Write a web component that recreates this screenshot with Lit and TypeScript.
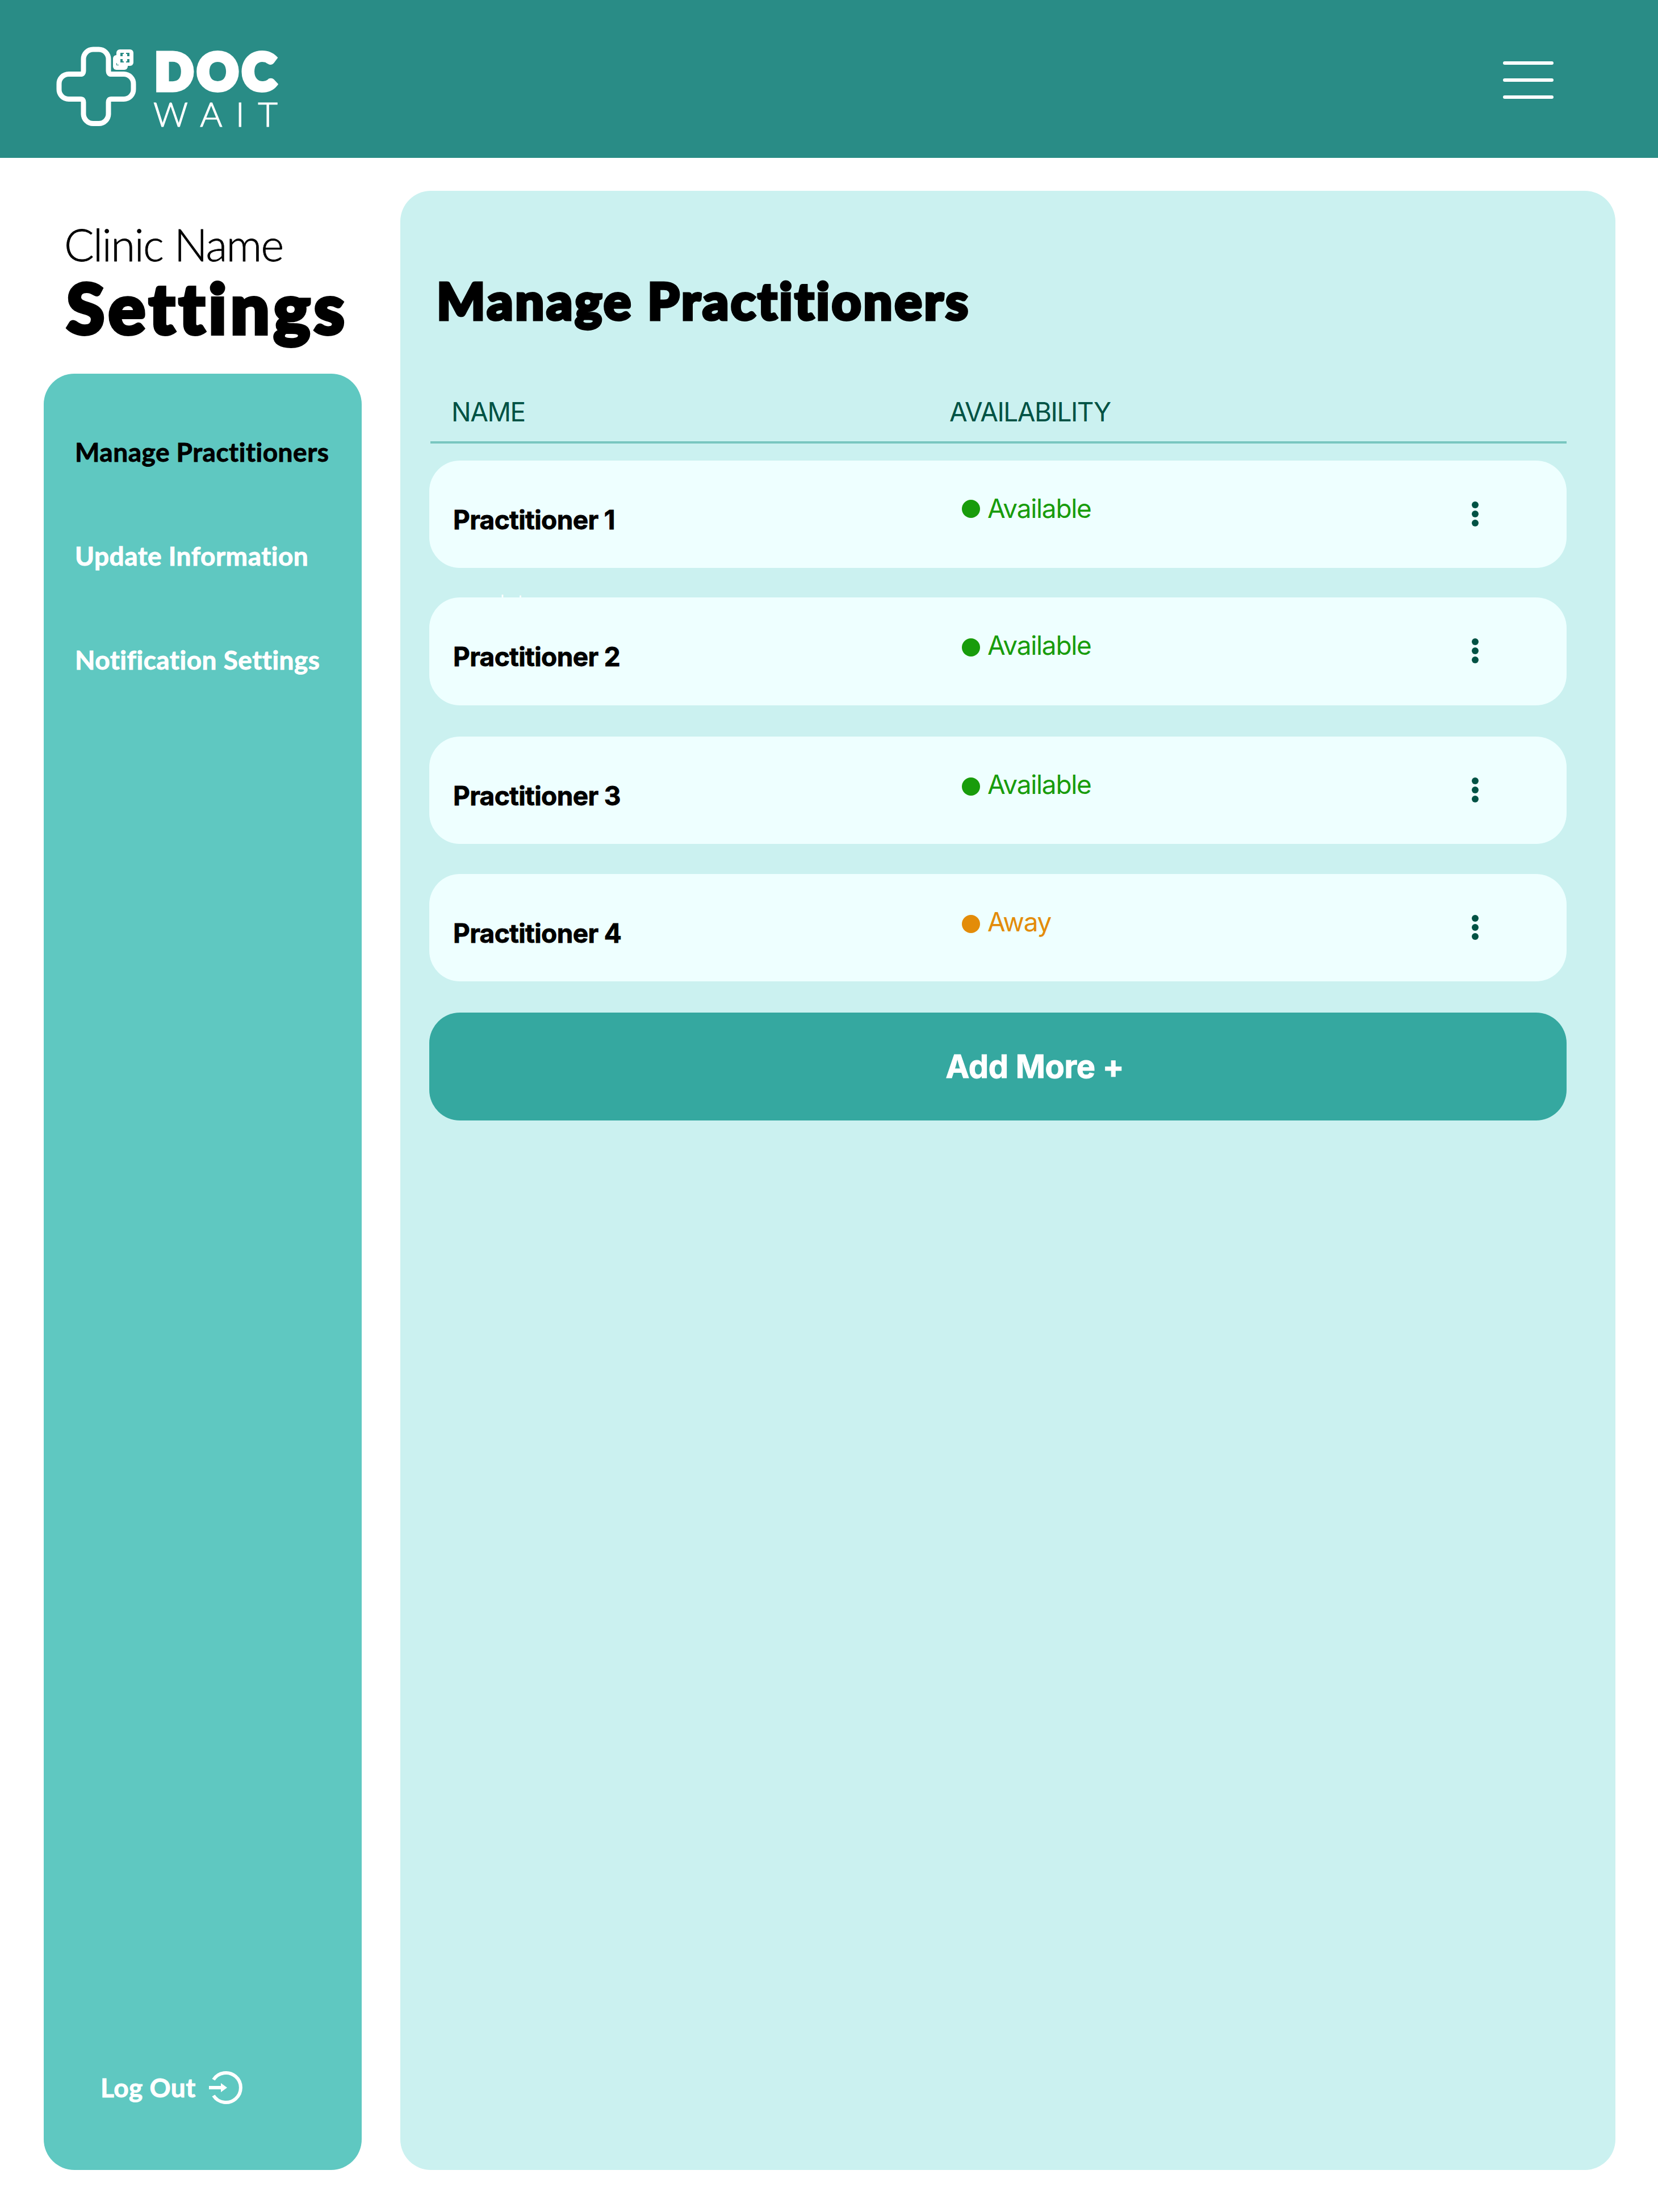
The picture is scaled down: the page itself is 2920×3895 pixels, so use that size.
import { LitElement, html, css } from "lit";
import { customElement, property } from "lit/decorators.js";

type Status = "Available" | "Away";
interface Practitioner { name: string; status: Status; }

const PRACTITIONERS: Practitioner[] = [
  { name: "Practitioner 1", status: "Available" },
  { name: "Practitioner 2", status: "Available" },
  { name: "Practitioner 3", status: "Available" },
  { name: "Practitioner 4", status: "Away" },
];

@customElement("doc-logo")
class DocLogo extends LitElement {
  static styles = css`
    :host { display: flex; }
    svg { display: block; }
    .bold { font: 900 88px Lato, sans-serif; stroke: #fff; stroke-width: 9px; }
    .thin { font: 300 60px Lato, sans-serif; stroke: #fff; stroke-width: 1.2px; }
  `;
  render() {
    return html`<svg width="440" height="218" viewBox="0 0 440 218" fill="#fff">
      <path d="M84 27H94A17 17 0 0 1 111 44V65Q111 70.500 116 70.500H138A17 17 0 0 1 155 88V97A17 17 0 0 1 138 114.500H116Q111 114.500 111 120V141A17 17 0 0 1 94 157.500H84A17 17 0 0 1 67 141V120Q67 114.500 62 114.500H41A17 17 0 0 1 24 97V88A17 17 0 0 1 41 70.500H62Q67 70.500 67 65V44A17 17 0 0 1 84 27Z"
        fill="none" stroke="#fff" stroke-width="9"/>
      <rect x="119" y="37" width="26" height="26" rx="6"/>
      <rect x="125" y="27" width="30" height="29" rx="6"/>
      <path d="M132 33h6v2h-2v4h-4zM142 33h6v6h-4v-4h-2zM132 44h4v4h2v2h-6zM144 44h4v6h-6v-2h2zM125 51h1v3h3v1h-4z" fill="#298c86"/>
      <text class="bold" x="193" y="97.500" textLength="212">DOC</text>
      <text class="thin" x="190" y="162.500" textLength="219">WAIT</text>
    </svg>`;
  }
}

@customElement("side-nav")
class SideNav extends LitElement {
  static styles = css`
    :host {
      display: flex; flex-direction: column; justify-content: space-between;
      box-sizing: border-box; flex: 1; border-radius: 54px; background: #5fc8c1;
      padding: 110px 0 115px 55px; color: #fff;
      font: 700 46px/56px Lato, sans-serif; white-space: nowrap; letter-spacing: 0.5px;
      font-variant-ligatures: none; -webkit-text-stroke: 0.9px currentColor;
    }
    .links { display: flex; flex-direction: column; gap: 127px; }
    .current { color: #000; }
    .logout { display: flex; align-items: center; gap: 22px; padding-left: 45px; }
    .logout svg { display: block; }
  `;
  render() {
    return html`
      <nav class="links">
        <div class="current">Manage Practitioners</div>
        <div>Update Information</div>
        <div>Notification Settings</div>
      </nav>
      <div class="logout"><span>Log Out</span>
        <svg width="60" height="60" viewBox="0 0 60 60" fill="none" stroke="#fff" stroke-width="6">
          <path d="M9 16A26 26 0 1 1 9 44"/><path d="M1 30H24"/><path d="M22 22L33 30L22 38Z" fill="#fff" stroke="none"/>
        </svg>
      </div>`;
  }
}

@customElement("practitioner-row")
class PractitionerRow extends LitElement {
  @property({ attribute: false }) person!: Practitioner;
  static styles = css`
    :host {
      display: grid; grid-template-columns: 938px 898px 1fr; box-sizing: border-box;
      height: 189px; border-radius: 54px; background: #eeffff; position: relative;
      font: 400 46px/56px Inter, sans-serif; white-space: nowrap;
    }
    .name { padding: 76px 0 0 42px; font-weight: 700; letter-spacing: -0.65px; -webkit-text-stroke: 0.8px #000; }
    .status { display: flex; align-items: center; gap: 13px; height: 56px; margin-top: 56px; letter-spacing: -1.3px; }
    .dot { width: 32px; height: 32px; border-radius: 50%; background: currentColor; margin-top: 2px; }
    :host(.low) .dot { margin-top: 7px; }
    .available { color: #189c0b; }
    .away { color: #e38c09; }
    .menu { display: flex; flex-direction: column; gap: 4px; padding-top: 72px; }
    .menu i { width: 12px; height: 12px; border-radius: 50%; background: #005244; }
  `;
  render() {
    return html`
      <div class="name">${this.person.name}</div>
      <div class="status ${this.person.status.toLowerCase()}"><i class="dot"></i><span>${this.person.status}</span></div>
      <div class="menu"><i></i><i></i><i></i></div>`;
  }
}

@customElement("app-root")
class AppRoot extends LitElement {
  static styles = css`
    :host { display: flex; flex-direction: column; box-sizing: border-box; width: 2920px; height: 3895px; background: #fff; }
    .bar { display: flex; justify-content: space-between; height: 278px; background: #298c86; padding: 0 184px 0 80px; box-sizing: border-box; }
    .bar doc-logo { padding-top: 60px; }
    .burger { display: flex; flex-direction: column; gap: 24px; padding-top: 108px; }
    .burger i { width: 89px; height: 6px; border-radius: 3px; background: #fff; }
    .body { display: flex; flex: 1; padding: 58px 75px 74px 77px; gap: 68px; }
    .side { display: flex; flex-direction: column; width: 560px; }
    .clinic { height: 322px; box-sizing: border-box; padding: 44px 0 0 36px; white-space: nowrap; color: #000; font-variant-ligatures: none; }
    .clinic-name { font: 300 78px/100px Lato, sans-serif; letter-spacing: -1.7px; -webkit-text-stroke: 0.8px #000; }
    .settings { font: 900 122px/120px Lato, sans-serif; padding: 1px 0 0 4px; letter-spacing: 6.6px; -webkit-text-stroke: 6px #000; }
    .panel { flex: 1; box-sizing: border-box; border-radius: 54px; background: #cbf1f0; padding: 127px 86px 0 51px; }
    h1 { margin: 0; padding-left: 13px; font: 900 90px/130px Lato, sans-serif; white-space: nowrap; font-variant-ligatures: none; letter-spacing: 3.85px; -webkit-text-stroke: 5px #000; }
    .head { display: grid; grid-template-columns: 877px 1fr; margin: 104px 0 30px 2px; padding: 0 0 24px 37px; border-bottom: 4px solid #79c6c0;
      font: 400 46px/56px Inter, sans-serif; letter-spacing: -1.5px; color: #005244; }
    .rows { display: flex; flex-direction: column; position: relative; }
    .rows practitioner-row:nth-of-type(2) { margin-top: 52px; height: 190px; }
    .rows practitioner-row:nth-of-type(3) { margin-top: 55px; }
    .rows practitioner-row:nth-of-type(4) { margin-top: 53px; }
    /* Sits under the second card, with only its top edge showing. */
    .under { position: absolute; left: 125px; top: 230px; font: 400 28px/34px Inter, sans-serif; color: #fff; }
    .add { margin-top: 55px; height: 190px; border-radius: 54px; background: #35a8a0; color: #fff; display: flex; align-items: center; justify-content: center;
      padding-left: 130px; box-sizing: border-box; font: 700 56px/68px Inter, sans-serif; letter-spacing: -0.3px; -webkit-text-stroke: 1px #fff; }
  `;
  render() {
    return html`
      <header class="bar"><doc-logo></doc-logo><div class="burger"><i></i><i></i><i></i></div></header>
      <div class="body">
        <div class="side">
          <div class="clinic"><div class="clinic-name">Clinic Name</div><div class="settings">Settings</div></div>
          <side-nav></side-nav>
        </div>
        <main class="panel">
          <h1>Manage Practitioners</h1>
          <div class="head"><span>NAME</span><span>AVAILABILITY</span></div>
          <div class="rows">
            <span class="under">Late</span>
            ${PRACTITIONERS.map((p, i) => html`<practitioner-row class=${i > 0 ? "low" : ""} .person=${p}></practitioner-row>`)}
            <div class="add">Add More +</div>
          </div>
        </main>
      </div>`;
  }
}
